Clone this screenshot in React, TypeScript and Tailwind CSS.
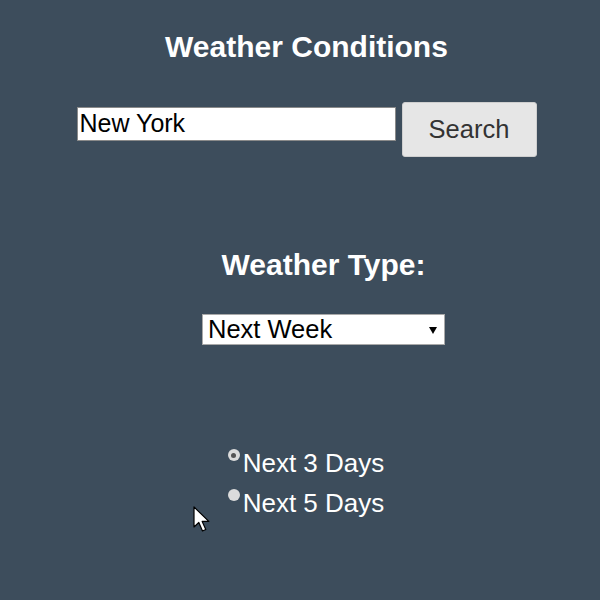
import { useState } from "react";

const font = { fontFamily: '"Liberation Sans", Arial, sans-serif' };

const Cursor = () => (
  <svg
    className="absolute left-[193px] top-[506px]"
    width="18"
    height="27"
    viewBox="0 0 18 27"
  >
    <path
      d="M1 1 L1 21 L5.8 16.5 L9.5 25 L12.8 23.5 L9.2 15.4 L15.8 15.4 Z"
      fill="#fff"
      stroke="#000"
      strokeWidth="1.2"
      strokeLinejoin="round"
    />
  </svg>
);

const Radio = ({ checked, label, onClick }: { checked: boolean; label: string; onClick: () => void }) => (
  <label onClick={onClick} className="flex cursor-pointer items-start leading-[40px]">
    <span className="mr-[3px] mt-[6px] flex h-[12px] w-[12px] items-center justify-center rounded-full bg-[#dcdcdc]">
      {checked && <span className="h-[5px] w-[5px] rounded-full bg-[#555]" />}
    </span>
    <span className="text-[26px] text-white">{label}</span>
  </label>
);

export default function App() {
  const [city, setCity] = useState("New York");
  const [range, setRange] = useState("3");

  return (
    <div style={font} className="relative h-[600px] w-[600px] overflow-hidden bg-[#3d4d5c]">
      {/* Title */}
      <div className="flex justify-center pl-[13px] pt-[30px]">
        <h1 className="text-[30px] font-bold leading-[34px] text-white">Weather Conditions</h1>
      </div>

      {/* Search row */}
      <div className="mt-[38px] flex items-start justify-center pl-[13px]">
        <input
          value={city}
          onChange={(e) => setCity(e.target.value)}
          className="mt-[5px] h-[34px] w-[319px] border border-[#8a8a8a] bg-white pl-[2px] text-[25px] text-black outline-none"
        />
        <button className="ml-[6px] h-[55px] w-[135px] rounded-[3px] border border-[#cfcfcf] bg-[#e6e6e6] text-[25.5px] text-[#333]">
          Search
        </button>
      </div>

      {/* Weather type */}
      <div className="mt-[91px] flex justify-center pl-[47px]">
        <h2 className="text-[30px] font-bold leading-[34px] text-white">Weather Type:</h2>
      </div>

      <div className="mt-[32px] flex justify-center pl-[47px]">
        <div className="relative h-[31px] w-[243px]">
          <select
            defaultValue="week"
            className="h-full w-full appearance-none border border-[#a9a9a9] bg-white pl-[5px] text-[25.5px] leading-[29px] text-black outline-none"
          >
            <option value="today">Today</option>
            <option value="week">Next Week</option>
          </select>
          <svg className="pointer-events-none absolute right-[8px] top-[13px]" width="8" height="7" viewBox="0 0 8 7">
            <path d="M0 0 H8 L4 7 Z" fill="#000" />
          </svg>
        </div>
      </div>

      {/* Range radios */}
      <div className="mt-[98px] flex justify-center pl-[12px]">
        <div className="flex flex-col">
          <Radio checked={range === "3"} label="Next 3 Days" onClick={() => setRange("3")} />
          <Radio checked={range === "5"} label="Next 5 Days" onClick={() => setRange("5")} />
        </div>
      </div>

      <Cursor />
    </div>
  );
}
